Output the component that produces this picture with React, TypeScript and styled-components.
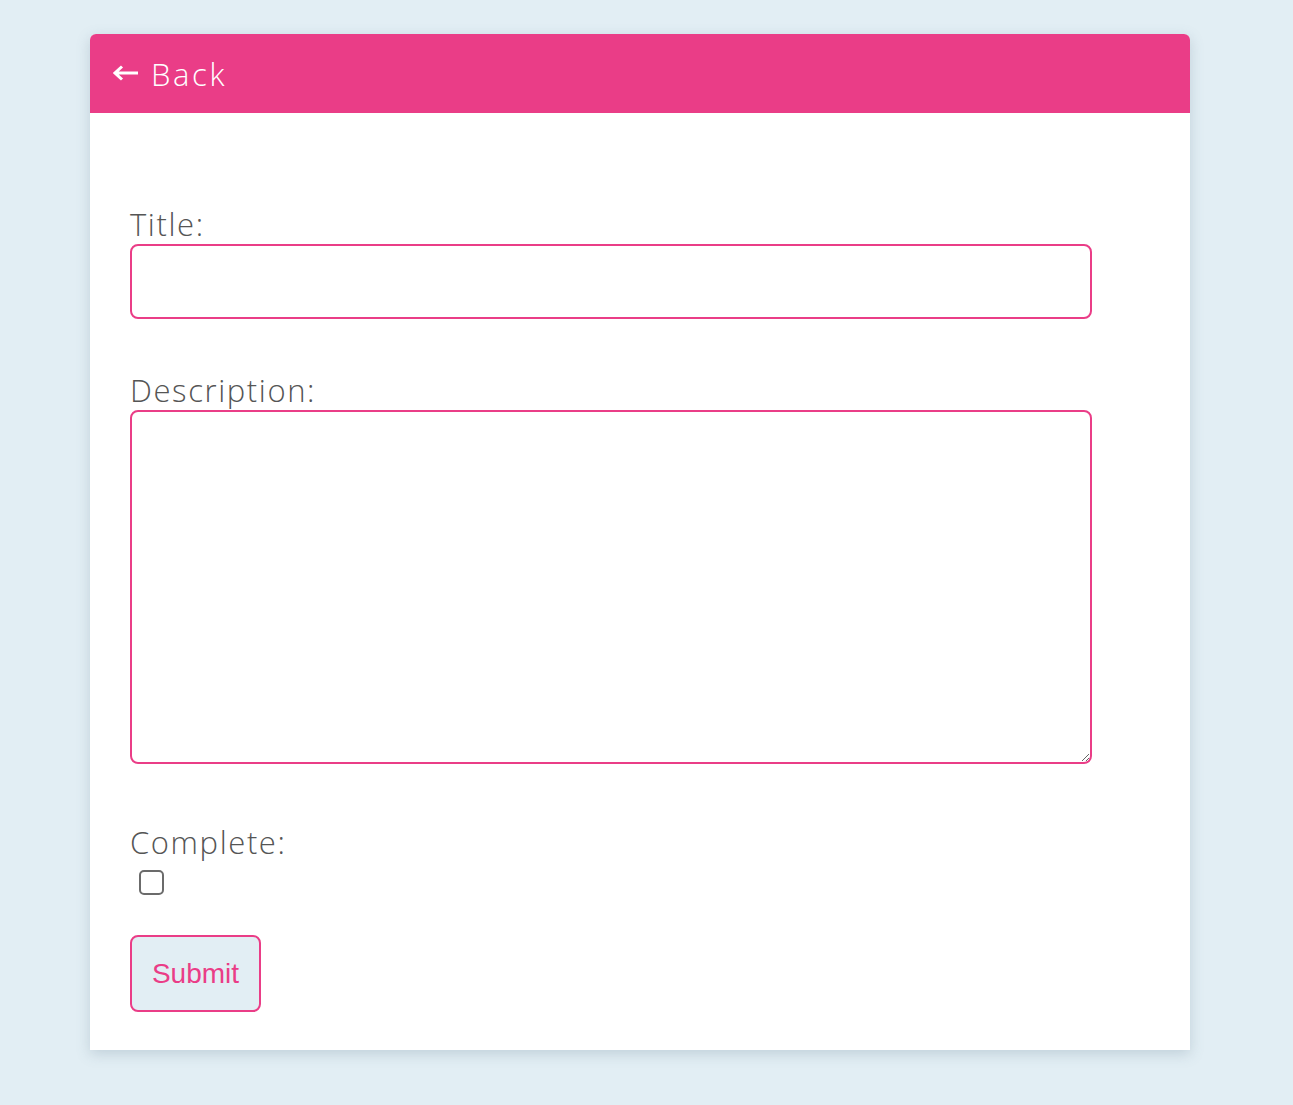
import React from "react";
import styled, { createGlobalStyle } from "styled-components";

const Global = createGlobalStyle`
  html, body { margin: 0; padding: 0; background: #e2eef4; }
  body { font-family: "Open Sans", "Liberation Sans", sans-serif; }
  * { box-sizing: border-box; }
`;

const PINK = "#ea3d87";

const Page = styled.div`
  min-height: 1105px;
  padding: 34px 0 0 90px;
`;

const Card = styled.div`
  width: 1100px;
  background: #fff;
  border-radius: 6px 6px 0 0;
  box-shadow: 0 4px 14px rgba(90, 120, 140, 0.25);
`;

const Header = styled.div`
  height: 79px;
  background: ${PINK};
  border-radius: 6px 6px 0 0;
  display: flex;
  align-items: center;
  padding-left: 23px;
`;

const BackLink = styled.a`
  color: #fff;
  font-weight: 300;
  font-size: 31px;
  letter-spacing: 2.6px;
  text-decoration: none;
  display: flex;
  align-items: center;
  gap: 12px;
  cursor: pointer;
`;

const ArrowIcon = styled.svg`
  width: 26px;
  height: 16px;
  flex: none;
  margin-top: -2px;
`;

const Form = styled.form`
  display: flex;
  flex-direction: column;
  padding: 93px 40px 38px 40px;
`;

const Label = styled.label`
  display: block;
  color: #555;
  font-weight: 300;
  font-size: 31px;
  letter-spacing: 1.6px;
  line-height: 36px;
  margin-bottom: 2px;
`;

const Field = styled.div<{ $gap: number }>`
  display: flex;
  flex-direction: column;
  margin-bottom: ${(p) => p.$gap}px;
`;

const TextInput = styled.input`
  width: 962px;
  height: 75px;
  border: 2px solid ${PINK};
  border-radius: 8px;
  outline: none;
  font-size: 20px;
  padding: 0 12px;
`;

const TextArea = styled.textarea`
  width: 962px;
  height: 354px;
  border: 2px solid ${PINK};
  border-radius: 8px;
  outline: none;
  font-size: 20px;
  padding: 12px;
  resize: both;
  display: block;
`;

const Check = styled.input`
  width: 25px;
  height: 25px;
  margin: 8px 0 0 9px;
  appearance: none;
  border: 2px solid #6b6b6b;
  border-radius: 5px;
  background: #fff;
`;

const SubmitButton = styled.button`
  align-self: flex-start;
  width: 131px;
  height: 77px;
  background: #e2eef4;
  border: 2px solid ${PINK};
  border-radius: 8px;
  color: ${PINK};
  font-family: "Liberation Sans", Arial, sans-serif;
  font-size: 28px;
  cursor: pointer;
`;

export default function App() {
  return (
    <>
      <Global />
      <Page>
        <Card>
          <Header>
            <BackLink>
              <ArrowIcon viewBox="0 0 26 16" aria-hidden="true">
                <path
                  d="M2 8 H25 M9 1.5 L2 8 L9 14.5"
                  fill="none"
                  stroke="#fff"
                  strokeWidth="3"
                  strokeLinecap="butt"
                  strokeLinejoin="miter"
                />
              </ArrowIcon>
              <span>Back</span>
            </BackLink>
          </Header>
          <Form onSubmit={(e) => e.preventDefault()}>
            <Field $gap={53}>
              <Label htmlFor="title">Title:</Label>
              <TextInput id="title" type="text" />
            </Field>
            <Field $gap={60}>
              <Label htmlFor="desc">Description:</Label>
              <TextArea id="desc" />
            </Field>
            <Field $gap={40}>
              <Label htmlFor="done">Complete:</Label>
              <Check id="done" type="checkbox" />
            </Field>
            <SubmitButton type="submit">Submit</SubmitButton>
          </Form>
        </Card>
      </Page>
    </>
  );
}
